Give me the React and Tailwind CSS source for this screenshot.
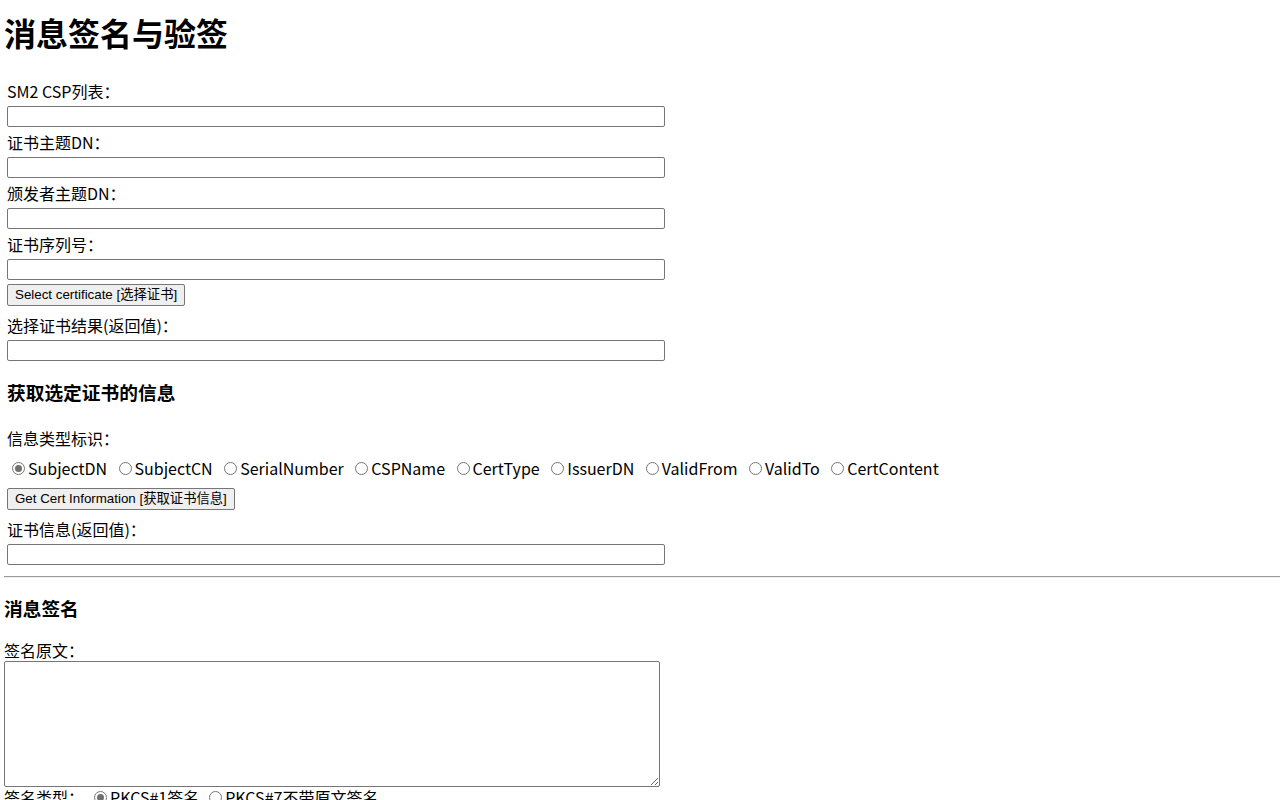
import { useState } from 'react';

const body = { fontFamily: '"Noto Sans CJK SC", "Liberation Sans", sans-serif' };
const btnFont = { fontFamily: '"Liberation Sans", "Noto Sans CJK SC", sans-serif' };

const Field = ({ label, className = '' }) => (
  <div className={`flex flex-col ${className}`}>
    <div className="h-[18px] leading-[18px] text-[16px] whitespace-nowrap">{label}</div>
    <div className="mt-[6px] w-[658px] h-[21px] border border-[#767676] rounded-[2px] bg-white"></div>
  </div>
);

const Radio = ({ checked, label, onClick, className = '' }) => (
  <span className={`inline-flex items-center cursor-default ${className}`} onClick={onClick}>
    <span className="ml-[5px] mr-[3px] w-[13px] h-[13px] rounded-full border border-[#767676] bg-white flex items-center justify-center shrink-0">
      {checked && <span className="w-[7px] h-[7px] rounded-full bg-[#707070]"></span>}
    </span>
    <span className="whitespace-nowrap">{label}</span>
  </span>
);

const Button = ({ children }) => (
  <button
    style={btnFont}
    className="h-[22px] px-[7px] text-[13.33px] leading-[20px] bg-[#efefef] border border-[#767676] rounded-[2px] text-black whitespace-nowrap"
  >
    {children}
  </button>
);

const infoTypes = ['SubjectDN', 'SubjectCN', 'SerialNumber', 'CSPName', 'CertType', 'IssuerDN', 'ValidFrom', 'ValidTo', 'CertContent'];

export default function App() {
  const [infoType, setInfoType] = useState('SubjectDN');
  const [signType, setSignType] = useState('p1');

  return (
    <div style={body} className="min-h-screen bg-white text-black pl-[4px] overflow-hidden">
      <h1 className="pt-[12px] h-[80px] text-[32px] leading-[40px] font-bold">消息签名与验签</h1>

      {/* certificate table */}
      <div className="pl-[3px] flex flex-col">
        <Field label="SM2 CSP列表：" className="mt-[2px]" />
        <Field label="证书主题DN：" className="mt-[6px]" />
        <Field label="颁发者主题DN：" className="mt-[6px]" />
        <Field label="证书序列号：" className="mt-[6px]" />
        <div className="mt-[4px] flex">
          <Button>Select certificate [选择证书]</Button>
        </div>
        <Field label="选择证书结果(返回值)：" className="mt-[10px]" />

        <h3 className="mt-[20px] h-[22px] leading-[22px] text-[18.72px] font-bold">获取选定证书的信息</h3>

        <div className="mt-[26px] h-[18px] leading-[18px] text-[16px]">信息类型标识：</div>
        <div className="mt-[10px] h-[22px] flex items-center text-[16px]">
          {infoTypes.map((t, i) => (
            <Radio
              key={t}
              label={t}
              checked={infoType === t}
              onClick={() => setInfoType(t)}
              className={i === 0 ? '' : 'ml-[6.5px]'}
            />
          ))}
        </div>
        <div className="mt-[9px] flex">
          <Button>Get Cert Information [获取证书信息]</Button>
        </div>
        <Field label="证书信息(返回值)：" className="mt-[10px]" />
      </div>

      <hr className="mt-[11px] border-0 border-t border-t-[#9a9a9a] border-b border-b-[#eeeeee]" />

      <h3 className="mt-[19px] h-[22px] leading-[22px] text-[18.72px] font-bold">消息签名</h3>
      <div className="mt-[22px] h-[18px] leading-[18px] text-[16px]">签名原文：</div>
      <textarea className="block mt-[2px] w-[656px] h-[126px] border border-[#767676] rounded-[2px] resize-y bg-white"></textarea>
      <div className="h-[20px] flex items-center text-[16px]">
        <span>签名类型：</span>
        <Radio label="PKCS#1签名" checked={signType === 'p1'} onClick={() => setSignType('p1')} className="ml-[5px]" />
        <Radio label="PKCS#7不带原文签名" checked={signType === 'p7'} onClick={() => setSignType('p7')} className="ml-[5px]" />
      </div>
    </div>
  );
}
